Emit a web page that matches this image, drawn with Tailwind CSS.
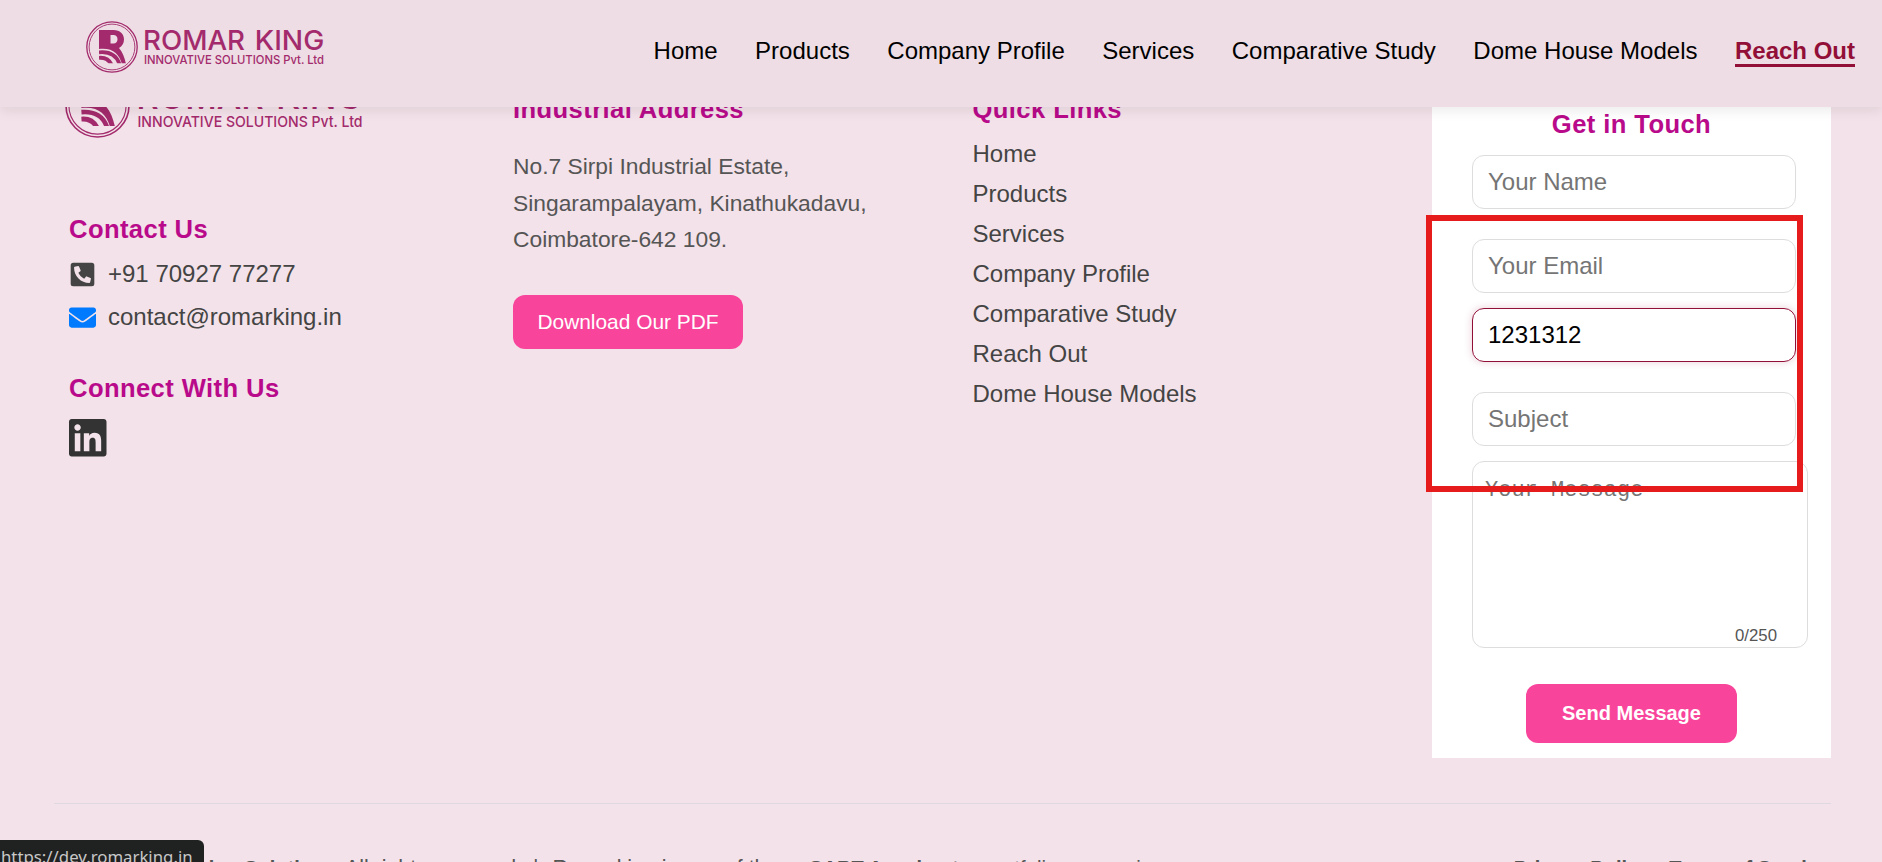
<!DOCTYPE html>
<html lang="en">
  <head>
    <meta charset="utf-8">
    <title>Romar King Innovative Solutions</title>
    <script src="https://cdn.jsdelivr.net/npm/@tailwindcss/browser@4"></script>
  </head>
  <body class="bg-[#f3e2e9] font-['Liberation_Sans',Arial,sans-serif] text-[24px] text-[#444]">
    <!-- logo, used in the header and in the footer -->
    <svg class="absolute h-0 w-0">
      <clipPath id="mark"><rect x="13" y="9" width="28" height="33.300" /></clipPath>
      <symbol id="logo" viewBox="0 0 240 52">
        <g fill="none" stroke="#a32a6c">
          <circle cx="26" cy="26" r="25.2" stroke-width="1.3" />
          <circle cx="26" cy="26" r="22.9" stroke-width=".9" />
        </g>
        <g clip-path="url(#mark)">
          <path fill="#a32a6c" fill-rule="evenodd" d="M13 9h14.500c6.500 0 10.500 4 10.500 9.500 0 4-2 6.800-5 8.500 3.500 4 5.500 9.500 7 16h-4C33 33 27 26.500 13 28zM24.500 14v8.500h3c2.600 0 4-1.700 4-4.200 0-2.600-1.400-4.300-4-4.300z" />
          <g fill="none" stroke="#a32a6c">
            <path stroke-width="3.700" d="M13 31.300c10.500-1 18 3.500 20.800 12.700" />
            <path stroke-width="3.900" d="M13 36.900c6.500-.6 10.500 2 13 7.600" />
          </g>
        </g>
        <g fill="#a32a6c" font-family="Inter, sans-serif" font-weight="500">
          <text y="29" font-size="27.500"><tspan x="57" textLength="102" lengthAdjust="spacingAndGlyphs">ROMAR</tspan><tspan x="168.800" textLength="69.500" lengthAdjust="spacingAndGlyphs">KING</tspan></text>
          <text x="58" y="43" font-size="12" textLength="180" lengthAdjust="spacingAndGlyphs">INNOVATIVE SOLUTIONS Pvt. Ltd</text>
        </g>
      </symbol>
    </svg>

    <div class="relative h-[862px] overflow-hidden">
      <header class="relative z-10 flex h-[107px] justify-between bg-[#eedde4] pr-[27px] pl-[86px] shadow-[0_4px_12px_rgba(0,0,0,0.08)]">
        <svg class="mt-[21px] h-[52px] w-[240px]"><use href="#logo" /></svg>
        <nav class="flex gap-[37.500px] pt-[37px] leading-[27px] text-black">
          <a>Home</a>
          <a>Products</a>
          <a>Company Profile</a>
          <a>Services</a>
          <a>Comparative Study</a>
          <a>Dome House Models</a>
          <a class="h-[30px] border-b-[3px] border-[#920f38] font-bold text-[#920f38]">Reach Out</a>
        </nav>
      </header>

      <footer class="mr-[51px] ml-[54px]">
        <div class="flex h-[697px] border-b border-[#e0d8e0]">
          <section class="w-[459px] pl-[15px]">
            <svg class="-mt-[34px] -ml-[4px] h-[65px] w-[300px]"><use href="#logo" /></svg>
            <h3 class="mt-[75px] text-[25.600px] leading-[32px] font-bold tracking-[0.4px] text-[#b80a8a]">Contact Us</h3>
            <div class="mt-[15px] flex h-[28px] items-center">
              <svg class="h-[27px] w-[27px] -scale-x-100 fill-[#444]" viewBox="-32 0 512 512"><path d="M400 32H48A48 48 0 0 0 0 80v352a48 48 0 0 0 48 48h352a48 48 0 0 0 48-48V80a48 48 0 0 0-48-48zM94 416c-7.033 0-13.057-4.873-14.616-11.627l-14.998-65a15 15 0 0 1 8.707-17.160l69.998-29.999a15 15 0 0 1 17.518 4.289l30.997 37.885c48.944-22.963 88.297-62.858 110.781-110.780l-37.886-30.997a15.001 15.001 0 0 1-4.289-17.518l30-69.998a15 15 0 0 1 17.160-8.707l65 14.998A14.997 14.997 0 0 1 384 126c0 160.292-129.945 290-290 290z" /></svg>
              <span class="ml-3">+91 70927 77277</span>
            </div>
            <div class="mt-[15px] flex h-[28px] items-center">
              <svg class="h-[27px] w-[27px] fill-[#007bff]" viewBox="0 0 512 512"><path d="M502.300 190.800c3.900-3.100 9.700-.2 9.700 4.700V400c0 26.500-21.500 48-48 48H48c-26.500 0-48-21.500-48-48V195.600c0-5 5.700-7.800 9.700-4.700 22.400 17.400 52.100 39.500 154.100 113.600 21.100 15.400 56.700 47.800 92.200 47.600 35.700.3 72-32.800 92.300-47.600 102-74.100 131.600-96.300 154-113.700zM256 320c23.200.4 56.600-29.200 73.400-41.400 132.700-96.300 142.800-104.700 173.400-128.700 5.800-4.500 9.200-11.500 9.200-18.900v-19c0-26.500-21.500-48-48-48H48c-26.500 0-48 21.500-48 48v19c0 7.400 3.400 14.300 9.200 18.900 30.600 23.900 40.700 32.400 173.400 128.700 16.800 12.200 50.200 41.800 73.400 41.400z" /></svg>
              <span class="ml-3">contact@romarking.in</span>
            </div>
            <h3 class="mt-[41px] text-[25.600px] leading-[32px] font-bold tracking-[0.4px] text-[#b80a8a]">Connect With Us</h3>
            <svg class="mt-[15px] h-[37.500px] w-[37.500px] fill-[#333]" viewBox="0 32 448 448"><path d="M416 32H31.900C14.300 32 0 46.500 0 64.300v383.400C0 465.500 14.300 480 31.900 480H416c17.600 0 32-14.500 32-32.300V64.300c0-17.800-14.400-32.300-32-32.300zM135.400 416H69V202.200h66.500V416zm-33.200-243c-21.300 0-38.500-17.300-38.500-38.500S80.900 96 102.200 96c21.200 0 38.500 17.300 38.500 38.500 0 21.300-17.200 38.500-38.500 38.500zm282.100 243h-66.400V312c0-24.800-.5-56.700-34.500-56.700-34.600 0-39.900 27-39.900 54.900V416h-66.400V202.200h63.700v29.200h.9c8.900-16.800 30.600-34.500 62.900-34.500 67.200 0 79.700 44.300 79.700 101.900V416z" /></svg>
          </section>

          <section class="w-[459.500px]">
            <h3 class="-mt-[14px] text-[25.600px] leading-[32px] font-bold tracking-[0.4px] text-[#b80a8a]">Industrial Address</h3>
            <p class="mt-[23px] text-[22.800px] leading-[36.500px] text-[#555]">No.7 Sirpi Industrial Estate,<br>Singarampalayam, Kinathukadavu,<br>Coimbatore-642 109.</p>
            <button class="mt-[37px] h-[54px] w-[230px] rounded-xl bg-[#f8459b] text-[20.900px] text-white">Download Our PDF</button>
          </section>

          <section class="w-[459.500px]">
            <h3 class="-mt-[14px] text-[25.600px] leading-[32px] font-bold tracking-[0.4px] text-[#b80a8a]">Quick Links</h3>
            <ul class="mt-[9px] leading-[40px]">
              <li>Home</li>
              <li>Products</li>
              <li>Services</li>
              <li>Company Profile</li>
              <li>Comparative Study</li>
              <li>Reach Out</li>
              <li>Dome House Models</li>
            </ul>
          </section>

          <form class="relative h-[651px] w-[399px] bg-white px-10">
            <h3 class="mt-[1px] text-center text-[25.600px] leading-[32px] font-bold tracking-[0.4px] text-[#b80a8a]">Get in Touch</h3>
            <input class="mt-[15px] block h-[54px] w-[324px] rounded-xl border border-[#ddd] px-[15px] placeholder:text-[#757575]" placeholder="Your Name">
            <input class="mt-[30px] block h-[54px] w-[324px] rounded-xl border border-[#ddd] px-[15px] placeholder:text-[#757575]" placeholder="Your Email">
            <input class="mt-[15px] block h-[54px] w-[324px] rounded-xl border border-[#920f38] px-[15px] text-black shadow-[0_0_8px_rgba(146,15,56,0.2)]" value="1231312">
            <input class="mt-[30px] block h-[54px] w-[324px] rounded-xl border border-[#ddd] px-[15px] placeholder:text-[#757575]" placeholder="Subject">
            <div class="relative mt-[15px] w-[336px]">
              <textarea class="block h-[187px] w-[336px] resize-none rounded-xl border border-[#ddd] px-[12px] py-[15px] font-['Liberation_Mono',monospace] text-[22px] leading-[28px] placeholder:text-[#757575]" placeholder="Your Message"></textarea>
              <span class="absolute right-[31px] bottom-[2px] text-[16.800px] leading-[20px] text-[#555]">0/250</span>
            </div>
            <button type="button" class="mx-auto mt-[36px] block h-[59px] w-[211px] rounded-xl bg-[#f8459b] pb-[2px] text-[20px] font-bold text-white">Send Message</button>
            <div class="absolute top-[108px] -left-[6.500px] h-[277px] w-[377px] border-[6px] border-[#e61c1c]"></div>
          </form>
        </div>

        <div class="mt-[50px] flex justify-between text-[21.400px] leading-[28px] whitespace-nowrap text-[#555]">
          <p>© 2025 <b class="ml-[5px] text-[20px]">Romarking Solutions.</b> <span class="-ml-[2px]">All rights reserved.</span> <span class="mr-[8px] ml-[5px]">|</span> Romarking is one of the <b class="ml-[25px] text-[20px]">SART Accelerator</b> <span class="text-[20.500px]">portfolio companies.</span></p>
          <p class="mr-[2px] flex gap-[20px] text-[20px] font-bold"><a>Privacy Policy</a><a>Terms of Service</a></p>
        </div>
      </footer>

      <!-- link preview of the browser -->
      <div class="absolute top-[840px] left-0 z-20 h-[30px] w-[204px] rounded-tr-md bg-[#202121] pl-[1px] font-['Noto_Sans',sans-serif] text-[16.800px] leading-[34px] text-[#c8c8c8]">https://dev.romarking.in</div>
    </div>
  </body>
</html>
